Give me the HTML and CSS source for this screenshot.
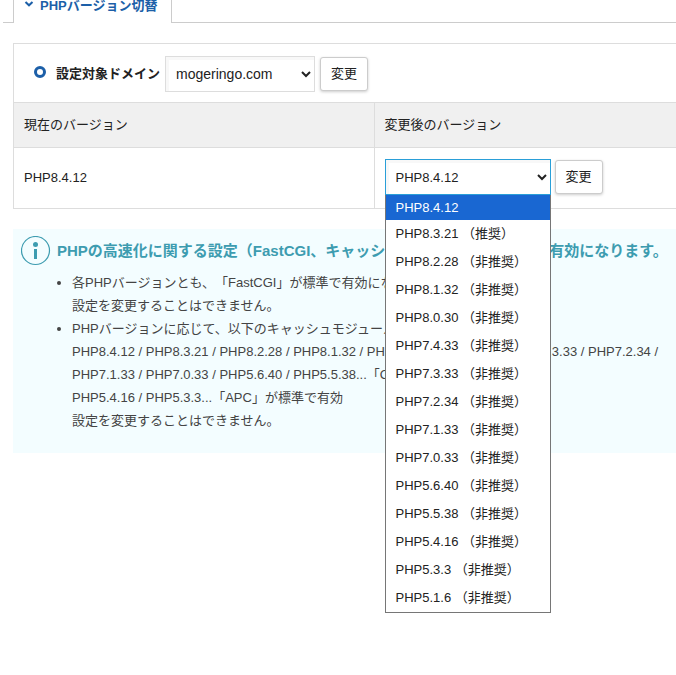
FILE: index.html
```
<!DOCTYPE html>
<html lang="ja">
<head>
  <meta charset="UTF-8">
  <title>PHPバージョン切替</title>
  <link rel="stylesheet" href="styles.css">
</head>
<body>

  <nav class="tabs">
    <a href="#" class="tab">
      <svg class="tab-icon" width="10" height="6" viewBox="0 0 10 6"><path d="M1.5 1 L5 4.3 L8.5 1" fill="none" stroke="#1c5fa8" stroke-width="2"/></svg>
      PHPバージョン切替
    </a>
  </nav>

  <main class="content">
    <form class="version-box">
      <div class="domain-row">
        <label for="domain"><span class="ring"></span>設定対象ドメイン</label>
        <select id="domain" class="select domain-select">
          <option>mogeringo.com</option>
        </select>
        <button type="button" class="btn">変更</button>
      </div>

      <table class="version-table">
        <thead>
          <tr>
            <th>現在のバージョン</th>
            <th id="new-version">変更後のバージョン</th>
          </tr>
        </thead>
        <tbody>
          <tr>
            <td>PHP8.4.12</td>
            <td>
              <div class="version-row">
                <div class="dropdown">
                  <select class="select version-select" aria-labelledby="new-version">
                    <option>PHP8.4.12</option>
                  </select>
                  <ul class="dropdown-list" role="listbox" aria-labelledby="new-version">
                    <li class="selected" role="option" aria-selected="true">PHP8.4.12</li>
                    <li role="option">PHP8.3.21 （推奨）</li>
                    <li role="option">PHP8.2.28 （非推奨）</li>
                    <li role="option">PHP8.1.32 （非推奨）</li>
                    <li role="option">PHP8.0.30 （非推奨）</li>
                    <li role="option">PHP7.4.33 （非推奨）</li>
                    <li role="option">PHP7.3.33 （非推奨）</li>
                    <li role="option">PHP7.2.34 （非推奨）</li>
                    <li role="option">PHP7.1.33 （非推奨）</li>
                    <li role="option">PHP7.0.33 （非推奨）</li>
                    <li role="option">PHP5.6.40 （非推奨）</li>
                    <li role="option">PHP5.5.38 （非推奨）</li>
                    <li role="option">PHP5.4.16 （非推奨）</li>
                    <li role="option">PHP5.3.3 （非推奨）</li>
                    <li role="option">PHP5.1.6 （非推奨）</li>
                  </ul>
                </div>
                <button type="button" class="btn">変更</button>
              </div>
            </td>
          </tr>
        </tbody>
      </table>
    </form>

    <section class="info">
      <h3 class="info-title">
        <svg class="info-icon" width="30" height="30" viewBox="0 0 30 30">
          <circle cx="14.5" cy="14.5" r="14" fill="none" stroke="#3d9cb0" stroke-width="1.2"/>
          <circle cx="14.5" cy="8.5" r="2.5" fill="#3d9cb0"/>
          <rect x="13" y="13" width="3" height="10" fill="#3d9cb0"/>
        </svg>
        PHPの高速化に関する設定（FastCGI、キャッシュモジュール）が標準で有効になります。
      </h3>
      <ul class="info-list">
        <li>各PHPバージョンとも、「FastCGI」が標準で有効になります。<br>
          設定を変更することはできません。</li>
        <li>PHPバージョンに応じて、以下のキャッシュモジュールが標準で有効になります。<br>
          PHP8.4.12 / PHP8.3.21 / PHP8.2.28 / PHP8.1.32 / PHP8.0.30 / PHP7.4.33 / PHP7.3.33 / PHP7.2.34 /<br>
          PHP7.1.33 / PHP7.0.33 / PHP5.6.40 / PHP5.5.38...「OPcache」が標準で有効<br>
          PHP5.4.16 / PHP5.3.3...「APC」が標準で有効<br>
          設定を変更することはできません。</li>
      </ul>
    </section>
  </main>

</body>
</html>
```

FILE: styles.css
```
* {
  box-sizing: border-box;
}
body {
  margin: 0;
  min-height: 100vh;
  background: #fff;
  color: #222;
  font-family: "Liberation Sans", "Noto Sans CJK JP", sans-serif;
  font-size: 13px;
  text-spacing-trim: space-all;
}

/* Tabs */
.tabs {
  display: flex;
  margin: -12px 0 0 3px;
}
.tabs::before,
.tabs::after {
  content: "";
  width: 10px;
  border-bottom: 1px solid #ccc;
}
.tabs::after {
  flex: 1;
}
.tab {
  display: flex;
  align-items: center;
  gap: 6px;
  height: 35px;
  padding: 0 14px 4px 10px;
  border: 1px solid #ccc;
  border-bottom: none;
  color: #1c5fa8;
  font-weight: bold;
  text-decoration: none;
  white-space: nowrap;
}

.content {
  padding: 20px 0 0 13px;
}

/* Version form */
.version-box {
  border: 1px solid #ddd;
  border-right: none;
}
.domain-row {
  display: flex;
  align-items: center;
  gap: 5px;
  height: 58px;
  padding: 2px 0 0 20px;
}
.domain-row label {
  display: flex;
  align-items: center;
  gap: 10px;
  padding-bottom: 4px;
  font-weight: bold;
}
.ring {
  width: 12px;
  height: 12px;
  border: 3px solid #1c5fa8;
  border-radius: 50%;
}
.select {
  height: 36px;
  padding: 0 0 0 6px;
  border: 1px solid #ddd;
  border-radius: 0;
  background-color: #fff;
  box-shadow: inset 3px 3px 0 #f8f8f8;
  color: #222;
  font-family: inherit;
  font-size: 13px;
}
.domain-select {
  width: 150px;
  font-size: 14px;
}
.btn {
  width: 48px;
  height: 34px;
  padding: 0 0 3px;
  border: 1px solid #ccc;
  border-radius: 3px;
  background: #fff;
  box-shadow: 0 1px 3px rgba(0, 0, 0, 0.2);
  color: #222;
  font-family: inherit;
  font-size: 13px;
  cursor: pointer;
}

.version-table {
  width: 100%;
  border-collapse: collapse;
}
.version-table th,
.version-table td {
  height: 45px;
  padding: 0 10px 3px;
  border-top: 1px solid #ddd;
  font-weight: normal;
  text-align: left;
}
.version-table th {
  background: #f0f0f0;
}
.version-table td {
  height: 60px;
  padding-bottom: 1px;
}
.version-table th:first-child,
.version-table td:first-child {
  width: 360px;
  border-right: 1px solid #ddd;
}
.version-row {
  display: flex;
  align-items: center;
  gap: 4px;
}

/* Open drop-down */
.dropdown {
  position: relative;
  width: 166px;
}
.version-select {
  display: block;
  width: 100%;
  border-color: #2a9fd8;
}
.dropdown-list {
  position: absolute;
  top: 100%;
  left: 0;
  z-index: 1;
  width: 100%;
  margin: 0;
  padding: 0;
  border: 1px solid #767676;
  border-top: none;
  background: #fff;
  list-style: none;
}
.dropdown-list li {
  padding: 0 10px;
  line-height: 28px;
  white-space: nowrap;
}
.dropdown-list .selected {
  background: #1967d2;
  color: #fff;
  line-height: 25px;
}

/* Info */
.info {
  margin-top: 20px;
  padding: 7px 0 21px 8px;
  background: #f3fdff;
  color: #444;
  white-space: nowrap;
  overflow: hidden;
}
.info-title {
  display: flex;
  align-items: center;
  gap: 6px;
  margin: 0;
  color: #3d9cb0;
  font-size: 15px;
  line-height: 30px;
}
.info-list {
  margin: 5px 0 0;
  padding-left: 51px;
  line-height: 23px;
}
```
